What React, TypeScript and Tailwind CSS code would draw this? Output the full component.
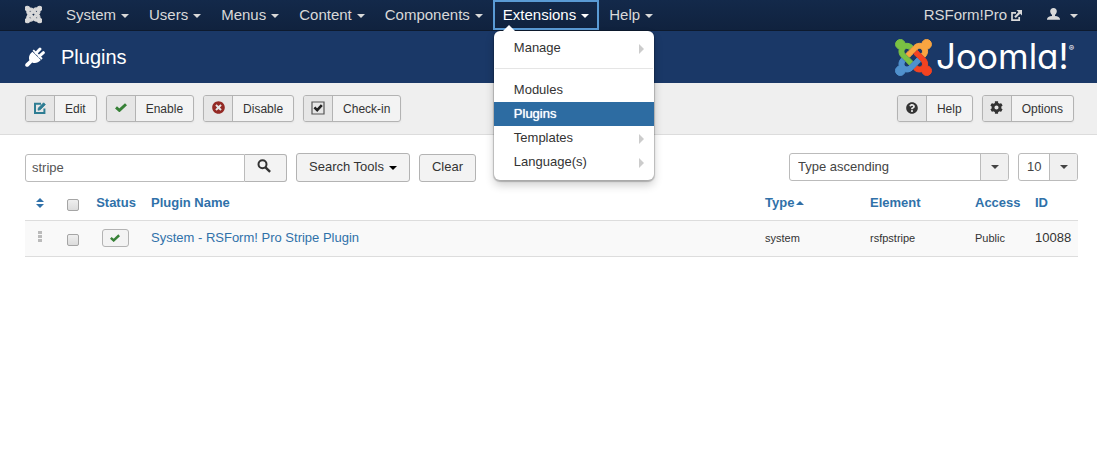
import { useState } from 'react';
import type { ReactNode } from 'react';
import { FaCog, FaJoomla, FaQuestionCircle, FaTimesCircle } from 'react-icons/fa';
import clsx from 'clsx';

interface MenuEntry {
  label: string;
  submenu?: boolean;
}

interface Plugin {
  id: number;
  name: string;
  type: string;
  element: string;
  access: string;
}

const MENUS = ['System', 'Users', 'Menus', 'Content', 'Components', 'Extensions', 'Help'];

const EXTENSION_ITEMS: MenuEntry[] = [
  { label: 'Modules' },
  { label: 'Plugins' },
  { label: 'Templates', submenu: true },
  { label: 'Language(s)', submenu: true },
];

const PLUGINS: Plugin[] = [
  { id: 10088, name: 'System - RSForm! Pro Stripe Plugin', type: 'system', element: 'rsfpstripe', access: 'Public' },
];

/* ---------- Icons ---------- */

function Caret({ className }: { className?: string }) {
  return (
    <svg viewBox="0 0 8 4" className={clsx('h-1 shrink-0', className)} fill="currentColor" aria-hidden="true">
      <path d="M0 0h8L4 4z" />
    </svg>
  );
}

function CheckIcon({ className }: { className: string }) {
  return (
    <svg viewBox="0 0 12 9" className={className} fill="none" stroke="#378137" aria-hidden="true">
      <path d="m1 4.400 3.400 3L11 1.200" strokeWidth="2.900" />
    </svg>
  );
}

function PlugIcon() {
  return (
    <svg viewBox="0 0 20 20" className="size-5 text-white" fill="currentColor" aria-hidden="true">
      <path d="M7.500 4.800 15.800 13C13.200 16 9.800 16.600 7.200 15.400L3.600 19.200Q2.400 20.200 1 19.600L.4 19Q-.2 17.600 .8 16.400L4.400 13.200C3.200 10.200 4.600 7 7.500 4.800z" />
      <path d="M8.200 3.200 17 12" stroke="currentColor" strokeWidth="1.800" />
      <path d="m11.200 6 3.800-4M14.400 9.200l4-3.600" stroke="currentColor" strokeWidth="2.900" strokeLinecap="round" />
    </svg>
  );
}

function EditIcon() {
  return (
    <svg viewBox="0 0 12 12" className="size-3" fill="none" stroke="#2e7d93" aria-hidden="true">
      <path d="M7 1.800H1V11h9.400V6.500" strokeWidth="2" />
      <path d="M4 8.200 4.400 6 9.600 .8l1.800 1.800-5.200 5.200z" fill="#2e7d93" strokeWidth=".8" />
    </svg>
  );
}

function CheckinIcon() {
  return (
    <svg viewBox="0 0 14 14" className="size-3.5" fill="none" aria-hidden="true">
      <path d="M1 1h12v12H1z" stroke="#555" strokeWidth="1.200" />
      <path d="m3.400 6.400 2.800 2.800 4.600-5" stroke="#222" strokeWidth="2.600" />
    </svg>
  );
}

function SearchIcon() {
  return (
    <svg viewBox="0 0 14 14" className="size-3.5" fill="none" stroke="#333" aria-hidden="true">
      <circle cx="5.500" cy="5.300" r="4" strokeWidth="2" />
      <path d="m8.500 8.300 4.600 4.600" strokeWidth="2.400" />
    </svg>
  );
}

function OutIcon() {
  return (
    <svg viewBox="0 0 11 11" className="size-[11px]" fill="none" stroke="currentColor" aria-hidden="true">
      <path d="M5 2.800H1v7.400h7.200V7" strokeWidth="1.700" />
      <path d="M4 7.200 8.600 2.600" strokeWidth="2.200" />
      <path d="M5.400 0H11v5.600z" fill="currentColor" stroke="none" />
    </svg>
  );
}

function UserIcon() {
  return (
    <svg viewBox="0 0 13 12" className="mb-0.5 h-3 w-[13px]" fill="currentColor" aria-hidden="true">
      <path d="M6.500 0C8.600 0 9.800 1.300 9.800 3.200 9.800 4.800 9 6 8 6.800V8c2.800.3 5 1.200 5 3.200v.6H0v-.6C0 9.200 2.200 8.300 5 8V6.800C4 6 3.200 4.800 3.200 3.200 3.200 1.300 4.400 0 6.500 0z" />
    </svg>
  );
}

function JoomlaMark() {
  return (
    <svg viewBox="-6 26 460 460" className="size-[37px]" strokeWidth="12" aria-hidden="true">
      <path
        fill="#7ac143"
        stroke="#7ac143"
        d="M.6 92.1C.6 58.8 27.4 32 60.4 32c30 0 54.5 21.900 59.200 50.200 32.600-7.600 67.100.6 96.500 30l-44.300 44.300c-20.500-20.500-42.600-16.300-55.400-3.500-14.300 14.300-14.300 37.900 0 52.200l99.500 99.500-44 44.300c-87.700-87.200-49.700-49.700-99.800-99.700-26.800-26.500-35-64.800-24.800-98.900C20.400 144.600.6 120.700.6 92.100z"
      />
      <path
        fill="#f9a541"
        stroke="#f9a541"
        d="M130.100 208.500l44.300 44.300c10-10 89.700-89.700 99.700-99.800 14.300-14.300 37.600-14.300 51.900 0 12.800 12.800 17 35-3.500 55.400l44 44.300c31.200-31.200 38.500-67.600 28.900-101.200 29.200-4.100 51.900-29.200 51.900-59.500 0-33.200-26.800-60.100-59.800-60.100-30.300 0-55.400 22.500-59.500 51.600-33.800-9.900-71.700-1.500-98.300 25.100-18.300 19.100-71.100 71.500-99.600 99.900z"
      />
      <path
        fill="#f44321"
        stroke="#f44321"
        d="M396.400 360.700c8.200-32.700-.9-68.500-26.300-93.900-11.800-12.200 5 4.700-99.500-99.700l-44.300 44.300 99.700 99.700c14.300 14.300 14.300 37.600 0 51.900-12.800 12.800-35 17-55.400-3.500l-44 44.300c27.600 30.200 68 38.800 102.700 28 5.500 27.400 29.700 48.100 58.900 48.100 33 0 59.800-26.800 59.800-60.100 0-30.200-22.500-55-51.600-59.100z"
      />
      <path
        fill="#5091cd"
        stroke="#5091cd"
        d="M312.100 307.600l-44-44.300c-87 86.400-50.400 50.400-99.700 99.800-14.300 14.300-37.600 14.300-51.900 0-13.100-13.400-16.900-35.300 3.200-55.400l-44-44.300c-30.200 30.200-38 65.200-29.500 98.300-26.700 6-46.200 29.900-46.200 58.200C0 453.200 26.800 480 59.800 480c28.600 0 52.500-19.800 58.600-46.700 32.700 8.200 68.500-.6 94.200-26 32.100-32 12.200-12.400 99.500-99.700z"
      />
    </svg>
  );
}

/* ---------- Navigation ---------- */

function SubmenuArrow() {
  return (
    <svg viewBox="0 0 5 10" className="mt-0.5 h-2.5 w-[5px]" fill="#ccc" aria-hidden="true">
      <path d="M0 0l5 5-5 5z" />
    </svg>
  );
}

function ExtensionsDropdown() {
  return (
    <ul className="absolute top-[31px] left-px z-10 w-40 rounded-md bg-white pt-[5px] pb-1.5 text-[13px] leading-6 text-[#333] shadow-[0_1px_1px_1px_rgba(0,0,0,0.2),0_5px_10px_rgba(0,0,0,0.2)]">
      <svg viewBox="0 0 12 6" className="absolute -top-1.5 left-[9px] h-1.5 w-3" fill="#fff" aria-hidden="true">
        <path d="M6 0l6 6H0z" />
      </svg>
      <li>
        <a href="#" className="flex items-center justify-between pr-2.5 pl-5">
          Manage
          <SubmenuArrow />
        </a>
      </li>
      <li className="mx-px mt-2 mb-[9px] border-t border-[#e5e5e5]" role="separator" />
      {EXTENSION_ITEMS.map((item) => (
        <li key={item.label}>
          <a
            href="#"
            className={clsx(
              'flex items-center justify-between pr-2.5 pl-5',
              item.label === 'Plugins' && 'bg-[#2d6ca2] text-white [text-shadow:0_0_1px_#fff]',
            )}
          >
            {item.label}
            {item.submenu && <SubmenuArrow />}
          </a>
        </li>
      ))}
    </ul>
  );
}

function NavBar({ openMenu, onToggle }: { openMenu: string; onToggle: (menu: string) => void }) {
  return (
    <nav className="flex h-[31px] border-b border-[#0d1a2e] bg-linear-to-b from-[#13294a] to-[#10223e] pr-[19px] pl-[25px] text-[15px] text-[#d9d9d9]">
      <a href="#" className="mr-3.5 flex items-center pb-0.5" aria-label="Joomla">
        <FaJoomla className="h-[19px] w-[17px]" stroke="currentColor" strokeWidth={30} />
      </a>
      <ul className="flex">
        {MENUS.map((menu) => {
          const isOpen = menu === openMenu;
          return (
            <li key={menu} className="relative">
              <button
                type="button"
                onClick={() => onToggle(menu)}
                className={clsx(
                  'flex h-[30px] items-center gap-[5px] px-2.5',
                  isOpen && 'text-white outline-2 -outline-offset-2 outline-[#5a9bd5]',
                )}
              >
                {menu}
                <Caret className="mt-0.5 w-2" />
              </button>
              {isOpen && menu === 'Extensions' && <ExtensionsDropdown />}
            </li>
          );
        })}
      </ul>
      <div className="ml-auto flex items-center gap-[25px]">
        <a href="#" className="flex items-center gap-1">
          RSForm!Pro
          <OutIcon />
        </a>
        <button type="button" className="flex items-center gap-2.5" aria-label="User menu">
          <UserIcon />
          <Caret className="mt-0.5 w-2" />
        </button>
      </div>
    </nav>
  );
}

/* ---------- Toolbar ---------- */

function ToolbarButton({ icon, label }: { icon: ReactNode; label: string }) {
  return (
    <button
      type="button"
      className="flex h-[27px] items-stretch overflow-hidden rounded-[3px] border border-[#b3b3b3] bg-[#f3f3f3] text-xs text-[#333] shadow-[0_1px_2px_rgba(0,0,0,0.05)]"
    >
      <span className="flex w-[29px] items-center justify-center border-r border-[#b3b3b3] bg-[#e6e6e6] pb-0.5">
        {icon}
      </span>
      <span className="self-center px-2.5">{label}</span>
    </button>
  );
}

/* ---------- Filters ---------- */

function FilterSelect({ label, options, className }: { label: string; options: string[]; className: string }) {
  return (
    <div className={clsx('relative', className)}>
      <select
        aria-label={label}
        className="h-7 w-full appearance-none rounded-[3px] border border-[#bbb] bg-white pr-8 pl-2 text-[13px] text-[#444]"
      >
        {options.map((option) => (
          <option key={option}>{option}</option>
        ))}
      </select>
      <span className="pointer-events-none absolute inset-y-px right-px flex w-7 items-center justify-center rounded-r-[2px] border-l border-[#bbb] bg-[#f0f0f0] text-[#444]">
        <Caret className="w-2" />
      </span>
    </div>
  );
}

function FilterBar() {
  const [search, setSearch] = useState('stripe');

  return (
    <form className="flex items-end gap-[9px] text-[13px] text-[#333]" onSubmit={(e) => e.preventDefault()}>
      <div className="flex">
        <input
          type="text"
          aria-label="Search"
          value={search}
          onChange={(e) => setSearch(e.target.value)}
          className="h-7 w-[220px] rounded-l-[3px] border border-[#bbb] px-1.5 pb-0.5 text-[#555]"
        />
        <button
          type="submit"
          aria-label="Search"
          className="flex h-7 w-[42px] items-center justify-center rounded-r-[3px] border border-l-0 border-[#b3b3b3] bg-[#f3f3f3] pr-1 pb-1"
        >
          <SearchIcon />
        </button>
      </div>
      <button
        type="button"
        className="flex h-[29px] items-center gap-[5px] rounded-[3px] border border-[#b3b3b3] bg-[#f3f3f3] px-3 pb-0.5"
      >
        Search Tools
        <Caret className="mt-0.5 w-2 text-black" />
      </button>
      <button
        type="button"
        className="h-7 rounded-[3px] border border-[#b3b3b3] bg-[#f3f3f3] px-3 pb-0.5"
        onClick={() => setSearch('')}
      >
        Clear
      </button>
      <div className="ml-auto flex gap-[9px] self-start">
        <FilterSelect label="Sort by" options={['Type ascending', 'Type descending']} className="w-[220px]" />
        <FilterSelect label="Limit" options={['10', '20', '50']} className="w-[60px]" />
      </div>
    </form>
  );
}

/* ---------- Plugin list ---------- */

function RowCheckbox({ label }: { label: string }) {
  return (
    <input
      type="checkbox"
      aria-label={label}
      className="mt-1 block size-3 appearance-none rounded-[2px] border border-[#a5a5a5] bg-linear-to-b from-[#efefef] to-[#dcdcdc] checked:bg-[#3071a9]"
    />
  );
}

function PluginTable({ plugins }: { plugins: Plugin[] }) {
  return (
    <table className="w-full table-fixed border-collapse text-left text-[13px]">
      <thead>
        <tr className="h-[38px] border-b border-[#ddd] text-[#3071a9] [&>th]:pt-1">
          <th className="w-[34px]">
            <button type="button" aria-label="Ordering" className="flex w-[30px] justify-center">
              <svg viewBox="0 0 8 10" className="h-2.5 w-2" fill="currentColor" aria-hidden="true">
                <path d="M4 0l4 4H0zM4 10l4-4H0z" />
              </svg>
            </button>
          </th>
          <th className="w-[30px] pl-2">
            <RowCheckbox label="Check all items" />
          </th>
          <th className="w-[54px] text-center">
            <a href="#">Status</a>
          </th>
          <th className="px-2">
            <a href="#">Plugin Name</a>
          </th>
          <th className="w-[105px] px-2">
            <a href="#" className="flex items-center gap-0.5">
              Type
              <Caret className="w-2 rotate-180" />
            </a>
          </th>
          <th className="w-[105px] px-2">
            <a href="#">Element</a>
          </th>
          <th className="w-[60px] pl-2">
            <a href="#">Access</a>
          </th>
          <th className="w-[51px] pl-2">
            <a href="#">ID</a>
          </th>
        </tr>
      </thead>
      <tbody>
        {plugins.map((plugin) => (
          <tr key={plugin.id} className="h-9 border-b border-[#ddd] bg-[#f9f9f9] text-[#333]">
            <td className="pb-1">
              <span className="flex w-[30px] justify-center">
                <svg viewBox="0 0 4 11" className="h-[11px] w-1" fill="#bbb" aria-hidden="true">
                  <path d="M0 0h4v3H0zM0 4h4v3H0zM0 8h4v3H0z" />
                </svg>
              </span>
            </td>
            <td className="pl-2">
              <RowCheckbox label={`Select ${plugin.name}`} />
            </td>
            <td className="pr-0.5">
              <button
                type="button"
                aria-label="Disable plugin"
                className="mx-auto flex h-[18px] w-[27px] items-center justify-center rounded-[3px] border border-[#b3b3b3] bg-[#f3f3f3]"
              >
                <CheckIcon className="h-2 w-2.5" />
              </button>
            </td>
            <td className="px-2">
              <a href="#" className="text-[#3071a9]">
                {plugin.name}
              </a>
            </td>
            <td className="px-2 text-[11px]">{plugin.type}</td>
            <td className="px-2 text-[11px]">{plugin.element}</td>
            <td className="pl-2 text-[11px]">{plugin.access}</td>
            <td className="pl-2">{plugin.id}</td>
          </tr>
        ))}
      </tbody>
    </table>
  );
}

export default function App() {
  const [openMenu, setOpenMenu] = useState('Extensions');

  return (
    <div className="min-h-screen bg-white font-['Liberation_Sans',Arial,sans-serif]">
      <NavBar openMenu={openMenu} onToggle={(menu) => setOpenMenu(menu === openMenu ? '' : menu)} />

      <header className="flex h-[52px] items-center bg-[#1a3867] pr-[23px] pl-[25px] text-white">
        <PlugIcon />
        <h1 className="ml-4 text-xl">Plugins</h1>
        <div className="ml-auto flex items-center gap-1">
          <JoomlaMark />
          <span className="flex pb-0.5 font-['Inter',sans-serif] text-[35px] leading-9 [font-feature-settings:'cv11']">
            Joomla!<sup className="top-0 mt-1.5 text-[8px] leading-none">®</sup>
          </span>
        </div>
      </header>

      <div className="flex h-[52px] items-center gap-[9px] border-b border-[#dcdcdc] bg-[#efefef] pr-[23px] pl-[25px]">
        <ToolbarButton icon={<EditIcon />} label="Edit" />
        <ToolbarButton icon={<CheckIcon className="h-[9px] w-3" />} label="Enable" />
        <ToolbarButton icon={<FaTimesCircle size={13} color="#942a25" />} label="Disable" />
        <ToolbarButton icon={<CheckinIcon />} label="Check-in" />
        <div className="ml-auto flex gap-[9px]">
          <ToolbarButton icon={<FaQuestionCircle size={12} />} label="Help" />
          <ToolbarButton icon={<FaCog size={13} />} label="Options" />
        </div>
      </div>

      <main className="pt-[18px] pr-[19px] pl-[25px]">
        <FilterBar />
        <PluginTable plugins={PLUGINS} />
      </main>
    </div>
  );
}
